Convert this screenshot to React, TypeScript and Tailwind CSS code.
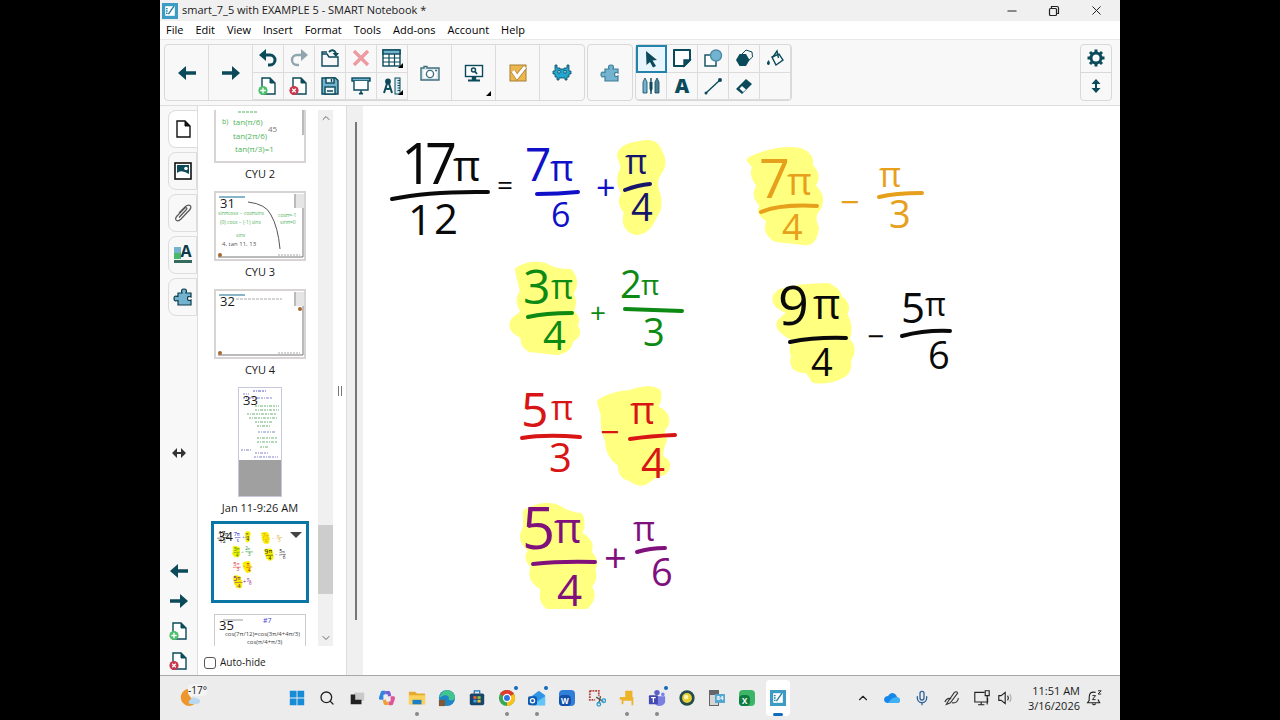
import type { ReactNode } from "react";
import { ChevronDown, ChevronUp, Mic, Minus, Search, X } from "lucide-react";

const TEAL = "#0b4a5a";
const BLUE = "#73b3d0";

const Svg = ({ size = 20, children }: { size?: number; children: ReactNode }) => (
    <svg width={size} height={size} viewBox="0 0 20 20" fill="none" stroke={TEAL} strokeWidth="1.4" aria-hidden>
        {children}
    </svg>
);

const ArrowLeft = () => (
    <Svg>
        <path d="M1 10 L9 3 V8.2 H19 V11.8 H9 V17 Z" fill={TEAL} stroke="none" />
    </Svg>
);

const ArrowRight = () => (
    <Svg>
        <path d="M19 10 L11 3 V8.2 H1 V11.8 H11 V17 Z" fill={TEAL} stroke="none" />
    </Svg>
);

const Undo = () => (
    <Svg>
        <path d="M5 7 H12 A5 5 0 0 1 12 17 H10" strokeWidth="3" />
        <path d="M1 7 L8 1 V13 Z" fill={TEAL} stroke="none" />
    </Svg>
);

const Redo = () => (
    <Svg>
        <path d="M15 7 H8 A5 5 0 0 0 8 17 H10" strokeWidth="2.4" stroke="#8fa6ae" />
        <path d="M19 7 L12 1 V13 Z" fill="#8fa6ae" stroke="none" />
    </Svg>
);

const OpenFile = () => (
    <Svg>
        <path d="M2 6 V18 H18 V9 H9 L7 6 Z M2 6 V4 H7" />
        <path d="M9 4 Q13 0 16 5" strokeWidth="2" />
        <path d="M12.5 5 H19 L16 9 Z" fill={TEAL} stroke="none" />
    </Svg>
);

const Delete = () => (
    <Svg>
        <path d="M3 3 L17 17 M17 3 L3 17" stroke="#ee9aa2" strokeWidth="3.4" />
    </Svg>
);

const TableIcon = () => (
    <Svg>
        <rect x="1" y="2" width="17" height="16" fill="#fff" />
        <rect x="1" y="2" width="17" height="4" fill={BLUE} />
        <path d="M1 10 H18 M1 14 H18 M7 6 V18 M12.5 6 V18" strokeWidth="1.2" />
    </Svg>
);

const PageIcon = ({ badge }: { badge?: "plus" | "cross" }) => (
    <Svg>
        <path d="M4 2 H12 L17 7 V18 H4 Z" fill="#fff" stroke={badge ? TEAL : "#111"} />
        <path d="M12 2 V7 H17 Z" fill={badge ? TEAL : "#111"} stroke={badge ? TEAL : "#111"} strokeWidth="1" />
        {badge === "plus" && (
            <>
                <circle cx="5" cy="14.5" r="4.6" fill="#4bbf6b" stroke="none" />
                <path d="M5 11.8 V17.2 M2.3 14.5 H7.7" stroke="#fff" strokeWidth="1.3" />
            </>
        )}
        {badge === "cross" && (
            <>
                <circle cx="5" cy="14.5" r="4.6" fill="#c8384f" stroke="none" />
                <path d="M3.2 12.7 L6.8 16.3 M6.8 12.7 L3.2 16.3" stroke="#fff" strokeWidth="1.3" />
            </>
        )}
    </Svg>
);

const Save = () => (
    <Svg>
        <path d="M2 2 H15.5 L18 4.5 V18 H2 Z" fill={BLUE} />
        <rect x="6" y="2" width="8" height="5" fill="#eef6fa" />
        <rect x="5" y="11" width="10" height="7" fill="#eef6fa" />
        <path d="M7 15 H13 M11.5 3 V6" />
    </Svg>
);

const Screen = () => (
    <Svg>
        <rect x="1" y="2" width="18" height="3" fill={BLUE} />
        <path d="M3 5 V14 H17 V5" fill="#fff" />
        <path d="M10 14 V16 M8 18 L10 15.5 L12 18 Z" fill={TEAL} strokeWidth="1" />
    </Svg>
);

const Compass = () => (
    <Svg>
        <path d="M6 3 V6 M5.5 6 L2 17 M6.5 6 L10 17 M3 12 Q6 14 9 12" strokeWidth="2" />
        <circle cx="6" cy="5.5" r="2.2" fill={TEAL} />
        <rect x="13" y="2" width="5" height="16" fill="#dcecf3" strokeWidth="1" />
        <path d="M15.5 4.5 H18 M15.5 7 H18 M15.5 9.5 H18 M15.5 12 H18 M15.5 14.5 H18" strokeWidth="1" />
    </Svg>
);

const Camera = () => (
    <Svg>
        <path d="M1 5 H4 V3.5 H7 V5 H19 V17 H1 Z" fill="#d8e8ee" stroke="#416f7d" />
        <rect x="3.5" y="7" width="13" height="8" fill="#fff" stroke="none" />
        <circle cx="10" cy="11" r="3.6" fill="#fff" stroke="#416f7d" />
        <path d="M15 7.5 H17" stroke="#416f7d" />
    </Svg>
);

const Monitor = () => (
    <Svg>
        <rect x="1.5" y="2.5" width="17" height="11" fill="#fff" />
        <path d="M4 17.5 H16" strokeWidth="2" />
        <path d="M8.5 14 H11.5 V17 H8.5 Z" fill={TEAL} />
        <circle cx="9.5" cy="7" r="2" strokeWidth="1.5" />
        <path d="M11 8.5 L13 11" strokeWidth="1.8" />
    </Svg>
);

const Check = () => (
    <Svg>
        <rect x="2" y="2" width="16" height="16" fill="#ecb84d" stroke="#a97f35" strokeWidth="1" />
        <path d="M5 8 L9 14 L17 4" stroke="#a97f35" strokeWidth="4.6" />
        <path d="M5 8 L9 14 L17 4" stroke="#fff" strokeWidth="3.2" />
    </Svg>
);

const Monster = () => (
    <Svg>
        <path
            d="M3 2 H5 V5 H8 V6 H12 V5 H15 V2 H17 V8 H19 V11 H17 V14 H15 V17 H13 V15 H7 V17 H5 V14 H3 V11 H1 V8 H3 Z"
            fill="#22a5cf"
            strokeWidth="0.8"
        />
        <path d="M6 7.5 H8 V10 H6 Z M12 7.5 H14 V10 H12 Z" fill="#fff" strokeWidth="0.8" />
    </Svg>
);

const Puzzle = ({ stroke = "#3f7f99" }: { stroke?: string }) => (
    <Svg>
        <path
            d="M5 18 V13.5 Q1 15 1 11.5 Q1 8 5 9.5 V6 H9 Q7.5 2 11 2 Q14.5 2 13 6 H18 V10 Q14.5 8.5 14.5 11.5 Q14.5 14.5 18 13 V18 Z"
            fill={BLUE}
            stroke={stroke}
            strokeWidth="1.2"
        />
    </Svg>
);

const Pointer = () => (
    <Svg>
        <path d="M4 2 L15 11 L10.5 11.5 L14 17 L11 18.5 L8 13 L4.5 16 Z" fill={TEAL} stroke="none" />
    </Svg>
);

const Note = () => (
    <Svg>
        <path d="M2 2 H18 V12 L12 18 H2 Z" fill="#fff" strokeWidth="2" strokeLinejoin="round" />
        <path d="M18 12 H12 V18 Z" fill={TEAL} />
    </Svg>
);

const Shapes = () => (
    <Svg>
        <rect x="2" y="7" width="11" height="11" fill="#fff" />
        <circle cx="13" cy="7.5" r="5.5" fill={BLUE} stroke="#4a8ba6" />
    </Svg>
);

const Hexagons = () => (
    <Svg>
        <path d="M8 6 L12 2 L18 4 L18.5 9 L14 13" strokeWidth="1" />
        <path d="M5.5 6 H12 L15.5 12 L12 18 H5.5 L2 12 Z" fill={TEAL} stroke="none" />
    </Svg>
);

const Fill = () => (
    <Svg>
        <path d="M7 9 L14 6 L18 12 L11 17 Z" fill="#fff" />
        <path d="M8 9 L12 3 L13.5 10" />
        <path d="M3.5 12 Q6 15 4 17 Q1.5 17 2 14.5 Z" fill={TEAL} stroke="none" />
    </Svg>
);

const Pens = () => (
    <Svg>
        <path d="M2 6 L4 2 L6 6 V17 H2 Z" fill={BLUE} strokeWidth="0.8" />
        <path d="M10 2 V18" strokeWidth="1.4" />
        <path d="M8.5 6 H11.5 V13 L10 16 L8.5 13 Z" fill={TEAL} stroke="none" />
        <path d="M14 6 L16 2 L18 6 V17 H14 Z" fill="#4c8195" strokeWidth="0.8" />
    </Svg>
);

const LineTool = () => (
    <Svg>
        <path d="M3 17 L17 4" />
        <circle cx="3" cy="17" r="1.5" fill={TEAL} stroke="none" />
        <circle cx="17" cy="4" r="2" fill={TEAL} stroke="none" />
    </Svg>
);

const Eraser = () => (
    <Svg>
        <path d="M2 13 L12 3 L18 8 L8 18 Z" fill={TEAL} stroke="none" />
        <path d="M5.5 12.5 L8 10 L12 13.5 L9 16 Z" fill="#fff" stroke="none" />
    </Svg>
);

const Gear = () => (
    <Svg>
        <path d="M10 1.5 V18.5 M1.5 10 H18.5 M4 4 L16 16 M16 4 L4 16" strokeWidth="3" />
        <circle cx="10" cy="10" r="5" fill="#fff" strokeWidth="3" />
    </Svg>
);

const UpDown = () => (
    <Svg>
        <path d="M10 6 V14" strokeWidth="2" />
        <path d="M10 3 L14.5 8 H5.5 Z M10 17 L14.5 12 H5.5 Z" fill={TEAL} stroke="none" />
    </Svg>
);

const Notebook = ({ size = 16 }: { size?: number }) => (
    <Svg size={size}>
        <rect x="0" y="0" width="20" height="20" fill="#3d9cc4" stroke="none" />
        <rect x="4" y="4" width="12" height="12" fill="#fff" stroke="none" />
        <path d="M8 14 L15 4 M5 7 H7 M5 10 H7 M5 13 H7" stroke="#2b7ea3" strokeWidth="1.8" />
    </Svg>
);

const Picture = () => (
    <Svg>
        <rect x="2" y="2" width="16" height="16" fill="#fff" stroke="#111" strokeWidth="1.6" />
        <path d="M4 4 H16 V14 H4 Z" fill={TEAL} stroke="none" />
        <path d="M4 12 Q8 8 16 13 V14 H4 Z" fill="#fff" stroke="none" />
        <circle cx="13" cy="7.5" r="1.8" fill="#fff" stroke="none" />
    </Svg>
);

const Clip = () => (
    <Svg>
        <path
            d="M6 14.5 L13 7 Q14.5 5.5 13.5 4.8 Q12.5 4.2 11 5.8 L4 13 Q1.5 16 3.5 17.5 Q5.5 18.5 8 16 L16.5 7 Q19 4 17 2.5 Q15 1.2 12.5 3.5 L6 10"
            stroke="#555"
            strokeWidth="1.2"
        />
    </Svg>
);

const Palette = () => (
    <Svg>
        <rect x="1" y="2" width="7" height="6" fill={BLUE} stroke="none" />
        <rect x="1" y="8" width="7" height="6" fill="#46b96a" stroke="none" />
        <path d="M1 16.5 H19" strokeWidth="3" stroke="#356b5c" />
    </Svg>
);

const toolPairs: { label: string; icon: ReactNode; more?: boolean }[] = [
    { label: "Undo", icon: <Undo /> },
    { label: "Redo", icon: <Redo /> },
    { label: "Open file", icon: <OpenFile /> },
    { label: "Delete", icon: <Delete /> },
    { label: "Table", icon: <TableIcon />, more: true },
    { label: "Add page", icon: <PageIcon badge="plus" /> },
    { label: "Delete page", icon: <PageIcon badge="cross" /> },
    { label: "Save", icon: <Save /> },
    { label: "Screen shade", icon: <Screen /> },
    { label: "Measurement tools", icon: <Compass />, more: true },
];

const drawTools: { label: string; icon: ReactNode }[] = [
    { label: "Select", icon: <Pointer /> },
    { label: "Note", icon: <Note /> },
    { label: "Shapes", icon: <Shapes /> },
    { label: "Polygons", icon: <Hexagons /> },
    { label: "Fill", icon: <Fill /> },
    { label: "Pens", icon: <Pens /> },
    { label: "Text", icon: <span className="text-xl font-extrabold leading-5 text-[#0b4a5a]">A</span> },
    { label: "Line", icon: <LineTool /> },
    { label: "Eraser", icon: <Eraser /> },
    { label: "Empty", icon: null },
];

const Corner = () => (
    <span className="absolute bottom-1 right-1 border-b-[5px] border-l-[5px] border-b-black border-l-transparent" />
);

const BigTool = ({ label, more, children }: { label: string; more?: boolean; children: ReactNode }) => (
    <button aria-label={label} className="relative flex w-11 items-center justify-center border-r border-[#dcdcdc] last:border-r-0">
        {children}
        {more && <Corner />}
    </button>
);

const Toolbar = () => (
    <div className="flex h-[66px] shrink-0 items-start justify-between border-t border-[#e8e8e8] bg-[#f8f8f8] px-1 pt-1">
        <div className="flex gap-0.5">
            <div className="flex h-[57px] rounded border border-[#d8d8d8]">
                <BigTool label="Previous page"><ArrowLeft /></BigTool>
                <BigTool label="Next page"><ArrowRight /></BigTool>
                <div className="grid grid-cols-5 grid-rows-2">
                    {toolPairs.map((t) => (
                        <button key={t.label} aria-label={t.label} className="relative flex w-[31px] items-center justify-center border-b border-r border-[#dcdcdc]">
                            {t.icon}
                            {t.more && <Corner />}
                        </button>
                    ))}
                </div>
                <BigTool label="Capture"><Camera /></BigTool>
                <BigTool label="Screen search" more><Monitor /></BigTool>
                <BigTool label="Response"><Check /></BigTool>
                <BigTool label="Activity builder"><Monster /></BigTool>
            </div>
            <div className="flex h-[57px] rounded border border-[#d8d8d8]">
                <BigTool label="Add-ons"><Puzzle /></BigTool>
            </div>
            <div className="grid h-[57px] grid-cols-5 grid-rows-2 rounded border border-[#d8d8d8]">
                {drawTools.map((t) => (
                    <button
                        key={t.label}
                        aria-label={t.label}
                        className={
                            t.label === "Select"
                                ? "flex w-[31px] items-center justify-center border-2 border-[#2483ad] bg-[#e8f5fc]"
                                : "flex w-[31px] items-center justify-center border-b border-r border-[#dcdcdc]"
                        }
                    >
                        {t.icon}
                    </button>
                ))}
            </div>
        </div>
        <div className="mr-1 grid h-[57px] w-8 grid-rows-2 rounded border border-[#d8d8d8]">
            <button aria-label="Settings" className="flex items-center justify-center border-b border-[#d8d8d8]"><Gear /></button>
            <button aria-label="Move toolbar" className="flex items-center justify-center"><UpDown /></button>
        </div>
    </div>
);

// x, baseline, size, text
type Mark = [number, number, number, string];

const ink: { color: string; marks: Mark[]; bars: string[] }[] = [
    {
        color: "#0a0a0a",
        marks: [
            [401, 184, 56, "1"], [425, 184, 56, "7"], [453, 181, 42, "π"],
            [408, 235, 42, "1"], [434, 234, 42, "2"], [497, 195, 28, "="],
        ],
        bars: ["M392 199 Q430 191 488 192"],
    },
    { color: "#1010c8", marks: [[525, 181, 46, "7"], [550, 181, 36, "π"], [551, 227, 34, "6"], [596, 200, 34, "+"]], bars: ["M537 194 Q558 194 578 192"] },
    { color: "#15156a", marks: [[625, 174, 34, "π"], [631, 221, 38, "4"]], bars: ["M625 190 Q638 185 650 184"] },
    {
        color: "#0c8a14",
        marks: [
            [523, 304, 48, "3"], [551, 299, 34, "π"], [543, 350, 40, "4"], [590, 323, 28, "+"],
            [620, 298, 38, "2"], [641, 295, 28, "π"], [643, 346, 38, "3"],
        ],
        bars: ["M528 317 Q545 313 572 313", "M625 309 L682 311"],
    },
    {
        color: "#d81414",
        marks: [
            [521, 427, 48, "5"], [551, 420, 34, "π"], [549, 472, 40, "3"], [600, 444, 34, "−"],
            [630, 424, 38, "π"], [641, 478, 42, "4"],
        ],
        bars: ["M522 438 Q545 434 580 437", "M630 439 Q650 436 675 435"],
    },
    {
        color: "#80107c",
        marks: [
            [522, 549, 58, "5"], [554, 543, 42, "π"], [557, 606, 44, "4"], [604, 573, 40, "+"],
            [633, 541, 34, "π"], [651, 586, 38, "6"],
        ],
        bars: ["M533 564 Q560 561 595 562", "M637 552 Q650 548 665 548"],
    },
    {
        color: "#e6a01c",
        marks: [
            [759, 198, 54, "7"], [787, 195, 38, "π"], [782, 240, 36, "4"], [840, 214, 34, "−"],
            [879, 187, 34, "π"], [889, 228, 38, "3"],
        ],
        bars: ["M761 212 Q780 204 817 206", "M879 197 Q895 193 922 193"],
    },
    {
        color: "#0a0a0a",
        marks: [
            [778, 325, 54, "9"], [813, 319, 42, "π"], [811, 376, 38, "4"], [867, 347, 30, "−"],
            [901, 323, 42, "5"], [925, 316, 32, "π"], [928, 369, 38, "6"],
        ],
        bars: ["M790 342 Q815 337 846 338", "M902 336 Q925 330 950 331"],
    },
];

const highlights = [
    "M620 155 Q622 146 640 144 Q656 140 659 152 Q666 162 659 172 Q653 180 656 190 Q662 206 654 216 Q648 232 636 232 Q622 228 627 212 Q618 202 625 194 Q616 180 624 168 Z",
    "M518 270 Q530 262 545 266 Q555 272 570 272 Q578 282 570 294 Q576 302 570 312 Q580 318 574 326 Q582 334 570 340 Q570 350 556 352 L530 349 Q522 345 524 336 Q508 330 514 320 Q520 316 524 312 Q516 300 523 292 Z",
    "M600 402 Q612 394 630 393 Q650 386 658 392 Q660 402 653 408 Q668 412 666 424 Q658 432 664 440 Q660 448 660 458 Q672 462 664 472 Q654 474 648 480 Q640 486 630 478 Q620 476 621 464 Q608 456 608 440 Q602 426 604 416 Z",
    "M526 512 Q545 502 558 508 Q566 514 580 516 Q584 526 578 534 Q594 542 588 552 Q598 562 592 568 Q596 580 588 586 Q596 596 586 606 L548 606 Q540 600 544 588 Q528 580 534 566 Q524 558 532 550 Q518 540 526 528 Z",
    "M750 160 Q770 150 790 150 Q812 150 810 166 Q820 176 812 186 Q824 196 818 208 Q810 216 816 228 Q814 244 804 242 L776 239 Q764 232 770 220 Q756 212 764 206 Q752 196 760 186 Q750 172 756 168 Z",
    "M780 292 Q800 286 828 286 Q840 292 838 298 Q850 304 844 314 Q852 328 846 340 Q856 348 848 360 Q850 372 840 376 Q828 382 814 380 Q810 372 806 370 Q790 370 794 356 Q790 346 798 340 Q776 330 780 322 Q786 316 792 312 Q772 306 776 296 Z",
];

const InkPage = ({ glow = "#ffff80" }: { glow?: string }) => (
    <svg className="block h-auto w-full" viewBox="363 106 757 569" role="img" aria-label="Sums and differences of angles">
        <g fill={glow} stroke={glow} strokeWidth="6" strokeLinejoin="round">
            {highlights.map((d) => <path key={d} d={d} />)}
        </g>
        {ink.map((group, i) => (
            <g key={i}>
                <g fill={group.color} className="font-['Open_Sans',sans-serif]">
                    {group.marks.map(([x, y, size, text]) => (
                        <text key={`${x}-${y}`} x={x} y={y} fontSize={size}>{text}</text>
                    ))}
                </g>
                <g fill="none" stroke={group.color} strokeWidth="4" strokeLinecap="round">
                    {group.bars.map((d) => <path key={d} d={d} />)}
                </g>
            </g>
        ))}
    </svg>
);

const PageNumber = ({ children }: { children: ReactNode }) => (
    <span className="absolute left-1 top-0.5 text-[13px] leading-4">{children}</span>
);

const PageFrame = ({ number, children }: { number: string; children?: ReactNode }) => (
    <button className="relative h-[70px] w-[92px] shrink-0 border-2 border-[#d8d4d4] bg-white text-left">
        <svg className="block" width="88" height="66" viewBox="0 0 88 66" aria-hidden>
            <rect x="3" y="3" width="26" height="2" fill="#8ab4c8" />
            <path d="M79 1 V15 M87 15 V64 H2" stroke="#777" fill="none" />
            <rect x="80" y="1" width="8" height="14" fill="#e5e5e5" />
            <circle cx="4" cy="62" r="2" fill="#a8672d" />
            <path d="M62 62 H84" stroke="#aaa" strokeDasharray="2 1" />
            {children}
        </svg>
        <PageNumber>{number}</PageNumber>
    </button>
);

const Label = ({ children }: { children: ReactNode }) => (
    <p className="mb-1.5 h-[22px] shrink-0 whitespace-nowrap text-center text-[11px] leading-[22px]">{children}</p>
);

const scribbles: [number, number, number, string][] = [
    [4, 6, 6, "#7777cc"], [14, 3, 14, "#4444cc"], [4, 10, 30, "#7777cc"],
    [16, 18, 24, "#55a866"], [16, 22, 24, "#55a866"], [8, 26, 30, "#55a866"], [10, 30, 28, "#55a866"],
    [16, 34, 18, "#55a866"], [18, 38, 14, "#55a866"], [19, 44, 18, "#6688bb"], [18, 50, 20, "#55a866"],
    [18, 54, 20, "#55a866"], [21, 59, 8, "#55a866"], [2, 62, 10, "#7777cc"], [16, 65, 14, "#7777cc"],
    [15, 69, 24, "#7777cc"],
];

const Thumbnails = () => (
    <div className="flex w-[120px] shrink-0 flex-col items-center overflow-hidden pl-1">
        <button className="h-[53px] w-[92px] shrink-0 border-b-2 border-l-2 border-r-2 border-[#d8d4d4]">
            <svg className="block" width="88" height="51" viewBox="0 0 88 51" fill="#52b35c" fontSize="7" aria-hidden>
                <path d="M22 2 H42" stroke="#52b35c" strokeDasharray="3 1" />
                <text x="6" y="14">b)</text>
                <text x="17" y="15" fontSize="8">tan(π/6)</text>
                <text x="17" y="29" fontSize="8">tan(2π/6)</text>
                <text x="19" y="42" fontSize="8">tan(π/3)=1</text>
                <text x="52" y="22" fill="#777" fontSize="8">45</text>
                <path d="M87 0 V25" stroke="#777" />
            </svg>
        </button>
        <Label>CYU 2</Label>
        <PageFrame number="31">
            <g fill="#52b35c" fontSize="5">
                <text x="2" y="22">sinπcosx − cosπsinx</text>
                <text x="4" y="31">(0) cosx − (-1) sinx</text>
                <text x="20" y="44">sinx</text>
                <text x="62" y="24">cosπ=-1</text>
                <text x="64" y="31">sinπ=0</text>
                <text x="6" y="53" fill="#555" fontSize="6">4, tan 11, 13</text>
            </g>
            <path d="M32 9 Q50 11 55 22 Q62 34 64 56" fill="none" stroke="#555" />
        </PageFrame>
        <Label>CYU 3</Label>
        <PageFrame number="32">
            <path d="M20 8 H66" stroke="#aaa" strokeDasharray="3 1" />
            <circle cx="84" cy="18" r="2" fill="#a8672d" />
        </PageFrame>
        <Label>CYU 4</Label>
        <button className="relative h-[110px] w-11 shrink-0 border border-[#c8c8dc] bg-white">
            <svg className="block" width="42" height="108" viewBox="0 0 42 108" aria-hidden>
                {scribbles.map(([x, y, w, color]) => (
                    <path key={`${x}-${y}`} d={`M${x} ${y} h${w}`} stroke={color} strokeWidth="1.5" strokeDasharray="2 1 1 1 3 1" opacity="0.6" />
                ))}
                <rect y="72" width="42" height="36" fill="#a0a0a0" />
            </svg>
            <PageNumber><span className="block pt-0.5">33</span></PageNumber>
        </button>
        <Label>Jan 11-9:26 AM</Label>
        <button className="relative -mt-1 h-[82px] w-[98px] shrink-0 border-[3px] border-[#0a76a6] bg-white">
            <InkPage glow="#f6f000" />
            <span className="absolute left-1 top-1 text-[13px] leading-4">34</span>
            <span className="absolute right-1 top-2 border-x-[6px] border-t-[6px] border-x-transparent border-t-[#444]" />
        </button>
        <button className="relative mt-[11px] h-[70px] w-[92px] shrink-0 border border-[#ccc] bg-white">
            <svg className="block" width="90" height="66" viewBox="0 0 90 66" fill="#444" fontSize="6" aria-hidden>
                <path d="M8 4 H28" stroke="#999" />
                <text x="48" y="7" fill="#4444cc" fontSize="7">#7</text>
                <text x="10" y="20">cos(7π/12)=cos(3π/4+4π/3)</text>
                <text x="32" y="28">cos(π/4+π/3)</text>
            </svg>
            <PageNumber>35</PageNumber>
        </button>
    </div>
);

const tabs = [
    { label: "Page sorter", icon: <PageIcon /> },
    { label: "Gallery", icon: <Picture /> },
    { label: "Attachments", icon: <Clip /> },
    { label: "Properties", icon: <span className="relative"><Palette /><b className="absolute -top-1 left-2 text-base leading-5 text-[#0b3a48]">A</b></span> },
    { label: "Add-ons", icon: <Puzzle stroke="#0b3a48" /> },
];

const SideBar = () => (
    <div className="flex shrink-0">
        <div className="flex w-[37px] flex-col bg-[#f8f8f8] pb-1">
            <div className="flex flex-col gap-1 pl-2 pt-1">
                {tabs.map((t, i) => (
                    <button
                        key={t.label}
                        aria-label={t.label}
                        className={
                            i === 0
                                ? "flex h-[38px] items-center justify-center rounded-l-lg border border-r-0 border-[#ddd] bg-white"
                                : "flex h-[38px] items-center justify-center rounded-l-lg border border-[#ddd]"
                        }
                    >
                        {t.icon}
                    </button>
                ))}
            </div>
            <button aria-label="Resize panel" className="my-auto self-center pt-7">
                <svg width="14" height="10" viewBox="0 0 14 10" fill="#333" aria-hidden>
                    <path d="M0 5 L5 0 V4 H9 V0 L14 5 L9 10 V6 H5 V10 Z" />
                </svg>
            </button>
            <div className="flex flex-col items-center gap-2.5">
                <button aria-label="Back"><ArrowLeft /></button>
                <button aria-label="Forward"><ArrowRight /></button>
                <button aria-label="Insert page"><PageIcon badge="plus" /></button>
                <button aria-label="Remove page"><PageIcon badge="cross" /></button>
            </div>
        </div>
        <div className="flex w-[136px] flex-col border-l border-[#ddd] bg-white pt-1">
            <div className="flex min-h-0 flex-1 overflow-hidden">
                <Thumbnails />
                <div className="flex w-4 shrink-0 flex-col items-center bg-[#f0f0f0] text-[#666]">
                    <ChevronUp size={12} className="my-0.5 shrink-0" />
                    <div className="min-h-0 flex-[400]" />
                    <div className="min-h-0 w-4 flex-[69] bg-[#cdcdcd]" />
                    <div className="min-h-0 flex-[36]" />
                    <ChevronDown size={12} className="my-0.5 shrink-0" />
                </div>
            </div>
            <label className="flex h-[29px] items-center gap-1 pl-1.5 pt-1 text-[10px]">
                <input type="checkbox" className="size-3 appearance-none rounded-[3px] border border-[#555] bg-white" />
                Auto-hide
            </label>
        </div>
        <div className="flex w-[14px] items-center justify-center border-r border-[#ddd] bg-white">
            <span className="h-2.5 w-1 border-x border-[#777]" />
        </div>
        <div className="w-4 bg-[#f0f0f0] pl-2 pt-4">
            <div className="h-[90%] w-0.5 bg-[#777]" />
        </div>
    </div>
);

const apps: { label: string; dot?: boolean; alert?: boolean; icon: ReactNode }[] = [
    { label: "Start", icon: <Svg size={18}><path d="M2 2 H9.5 V9.5 H2 Z M10.5 2 H18 V9.5 H10.5 Z M2 10.5 H9.5 V18 H2 Z M10.5 10.5 H18 V18 H10.5 Z" fill="#168bd8" stroke="none" /></Svg> },
    { label: "Search", icon: <Search size={16} color="#222" /> },
    { label: "Task view", icon: <Svg size={18}><rect x="7" y="4" width="11" height="9" fill="#c9c9c9" stroke="none" /><path d="M3 6 H8 V12 H15 V17 H3 Z" fill="#222" stroke="none" /></Svg> },
    {
        label: "Copilot",
        icon: (
            <Svg size={18}>
                <path d="M8 4 H5 L3 10 H6" stroke="#2f86e0" strokeWidth="4" strokeLinejoin="round" />
                <path d="M12 16 H15 L17 10 H14" stroke="#e0559a" strokeWidth="4" strokeLinejoin="round" />
                <path d="M8 4 H12 L13 8" stroke="#7b5bd6" strokeWidth="3.5" strokeLinejoin="round" />
                <path d="M12 16 H8 L7 12" stroke="#f0a03a" strokeWidth="3.5" strokeLinejoin="round" />
            </Svg>
        ),
    },
    { label: "File Explorer", dot: true, icon: <Svg size={18}><path d="M1 3 H8 L10 5 H19 V17 H1 Z" fill="#e6ab2e" stroke="none" /><path d="M1 7 H19 V17 H1 Z" fill="#fbd35c" stroke="none" /><path d="M5 12 H15 V17 H5 Z" fill="#1d80c4" stroke="none" /></Svg> },
    { label: "Edge", icon: <Svg size={18}><circle cx="10" cy="10" r="9" fill="#1c86c8" stroke="none" /><path d="M2 8 Q5 1 11 1 Q19 3 19 10 Q17 14 12 12 Q13 7 8 7 Q4 7 2 10 Z" fill="#42c48c" stroke="none" /><path d="M1 12 H8 V19 H1 Z" fill="#7d5a37" stroke="none" /></Svg> },
    { label: "Store", icon: <Svg size={18}><path d="M7 5 V2 H13 V5" stroke="#1a75b5" /><rect x="2" y="5" width="16" height="13" rx="2" fill="#17456b" stroke="none" /><path d="M6 8 H9.5 V11 H6 Z" fill="#f2603c" stroke="none" /><path d="M10.5 8 H14 V11 H10.5 Z" fill="#8cc63f" stroke="none" /><path d="M6 12 H9.5 V15 H6 Z" fill="#3aa7e8" stroke="none" /><path d="M10.5 12 H14 V15 H10.5 Z" fill="#fdc52d" stroke="none" /></Svg> },
    { label: "Chrome", dot: true, alert: true, icon: <Svg size={18}><circle cx="10" cy="10" r="9" fill="#3aa757" stroke="none" /><path d="M10 10 L2.2 5.5 A9 9 0 0 1 17.8 5.5 Z" fill="#e33b2e" stroke="none" /><path d="M10 10 L17.8 5.5 A9 9 0 0 1 10 19 Z" fill="#fbc116" stroke="none" /><circle cx="10" cy="10" r="4" fill="#2f74e0" stroke="#fff" /></Svg> },
    { label: "Outlook", dot: true, alert: true, icon: <Svg size={18}><path d="M4 8 L12 2 L19 7 V18 H4 Z" fill="#2f95e6" stroke="none" /><path d="M4 18 L19 8 V18 Z" fill="#63c5f5" stroke="none" /><rect x="0" y="8" width="10" height="10" rx="2" fill="#0f5cb0" stroke="none" /><circle cx="5" cy="13" r="2.3" stroke="#fff" /></Svg> },
    { label: "Word", icon: <span className="flex h-4 w-4 items-end rounded-sm bg-[#2f7fd8]"><b className="rounded-sm bg-[#1450a8] px-0.5 text-[8px] leading-[11px] text-white">W</b></span> },
    { label: "Snipping Tool", icon: <Svg size={18}><path d="M2 2 H12 V8 M2 2 V12 H8" stroke="#b5403a" strokeWidth="2" strokeDasharray="2 1" /><path d="M9 9 L17 14 M12 16 L14 8" stroke="#555" /><circle cx="17.5" cy="13" r="2" stroke="#2a9bd0" /><circle cx="12" cy="17" r="2" stroke="#2a9bd0" /></Svg> },
    { label: "Desk", dot: true, icon: <Svg size={18}><path d="M8 2 H16 V9 H17 V18 H15 V13 H6 V17 H4 V12 H2 V9 H8 Z" fill="#edb42a" stroke="none" /></Svg> },
    { label: "Teams", dot: true, alert: true, icon: <Svg size={18}><circle cx="10" cy="4" r="3" fill="#5b5fc7" stroke="none" /><circle cx="16.5" cy="6" r="2" fill="#7b83eb" stroke="none" /><path d="M7 8 H19 V15 Q17 19 12 19 Q7 18 7 14 Z" fill="#7b7fe0" stroke="none" /><rect x="1" y="7" width="10" height="10" rx="1" fill="#4349b0" stroke="none" /><path d="M3.5 9.5 H8.5 M6 9.5 V15" stroke="#fff" /></Svg> },
    { label: "Recorder", icon: <Svg size={18}><circle cx="10" cy="10" r="8.5" fill="#254c4d" stroke="none" /><circle cx="10" cy="10" r="5.5" fill="#e6cf38" stroke="none" /><circle cx="9" cy="9" r="2.5" fill="#fff7b0" stroke="none" /></Svg> },
    { label: "Calculator", icon: <span className="flex items-center"><span className="h-4 w-2.5 border border-t-[5px] border-[#666] bg-[#d5d5d5]" /><b className="-ml-1 bg-[#55a9d0] px-0.5 text-[6px] leading-[9px] text-white">84</b></span> },
    { label: "Excel", icon: <span className="flex h-4 w-4 items-end rounded-sm bg-[#3db568]"><b className="rounded-sm bg-[#107c41] px-[3px] text-[8px] leading-[11px] text-white">X</b></span> },
];

const Taskbar = () => (
    <footer className="flex h-[45px] shrink-0 items-center border-t border-[#a8a8a8] bg-[#ececec] text-[11px]">
        <button className="relative h-9 w-[122px] shrink-0 pl-5">
            <svg width="22" height="18" viewBox="0 0 22 18" aria-hidden>
                <path d="M8 0 A8.5 8.5 0 1 0 17 12 Q8 10 8 0 Z" fill="#ee962b" />
                <path d="M10 15 Q7 13 10 11 Q12 7 16 9 Q21 10 20 13 Q19 15 17 15 Z" fill="#b7d8f0" />
            </svg>
            <span className="absolute left-7 top-1 rounded bg-[#f4f4f4] text-[10px] leading-3">-17°</span>
        </button>
        <nav className="flex" aria-label="Apps">
            {apps.map((a) => (
                <button key={a.label} aria-label={a.label} className="relative flex h-9 w-[30px] items-center justify-center">
                    {a.icon}
                    {a.alert && <span className="absolute right-1 top-1.5 size-1 rounded-full bg-[#0f6cbd]" />}
                    {a.dot && <span className="absolute bottom-0 size-1 rounded-full bg-[#888]" />}
                </button>
            ))}
            <button aria-label="SMART Notebook" className="relative ml-1 flex h-9 w-6 items-center justify-center rounded bg-white">
                <Notebook />
                <span className="absolute bottom-0 h-[3px] w-2.5 rounded bg-[#0f6cbd]" />
            </button>
        </nav>
        <div className="ml-auto flex items-center gap-3.5 pr-[18px]">
            <ChevronUp size={14} color="#222" />
            <svg width="16" height="12" viewBox="0 0 16 12" aria-hidden>
                <path d="M4 11 Q0 11 0 7 Q1 4 4 4 Q7 -1 11 2 Q13 4 13 5 Q16 6 16 8 Q16 11 13 11 Z" fill="#1687e8" />
                <path d="M4 11 Q8 5 13 5 Q16 6 16 8 Q16 11 13 11 Z" fill="#3fb2f7" />
            </svg>
            <Mic size={16} color="#2f6398" />
            <Svg size={16}>
                <path d="M4 16 L13 3 Q16 1 17 4 L8 16 L3 18 Z M1 15 Q4 9 9 11 M10 16 Q17 17 18 10" stroke="#333" />
            </Svg>
            <div className="flex gap-2">
                <Svg size={16}>
                    <path d="M13 3 H1 V15 H17 V10 M5 18.5 H13 M9 15 V18 M14 1 H19 V7 H14 Z M16.5 7 V18" stroke="#222" />
                </Svg>
                <Svg size={16}>
                    <path d="M1 7 H4 L9 3 V17 L4 13 H1 Z M12 7 Q14 10 12 13" stroke="#222" />
                    <path d="M14.5 5 Q18 10 14.5 15" stroke="#aaa" />
                </Svg>
            </div>
            <div className="text-right leading-[15px]">
                <p>11:51 AM</p>
                <p>3/16/2026</p>
            </div>
            <button aria-label="Notifications" className="-ml-2">
                <Svg size={16}>
                    <path d="M12 3 Q4 1 4 9 V13 L2 16 H17 L15 12 M8 17 Q10 20 12 17" stroke="#222" />
                    <path d="M8 7 H12 L8 12 H12 M15 1 H19 L15 5 H19" stroke="#222" strokeWidth="1.2" />
                </Svg>
            </button>
        </div>
    </footer>
);

const menus = ["File", "Edit", "View", "Insert", "Format", "Tools", "Add-ons", "Account", "Help"];

const App = () => {
    return (
        <div className="h-screen bg-black px-[12.5%] font-['Open_Sans','Noto_Sans',sans-serif] text-[#1a1a1a]">
            <div className="flex h-full flex-col bg-white">
                <header className="flex h-[21px] shrink-0 items-center bg-[#f0f0f0] pl-0.5">
                    <Notebook />
                    <h1 className="ml-1 text-[11px]">smart_7_5 with EXAMPLE 5 - SMART Notebook *</h1>
                    <div className="ml-auto flex gap-7 pr-4">
                        <button aria-label="Minimize"><Minus size={14} color="#222" /></button>
                        <button aria-label="Restore">
                            <svg width="14" height="14" viewBox="0 0 14 14" fill="none" stroke="#222" strokeWidth="1.2" aria-hidden>
                                <rect x="2.5" y="4.5" width="7" height="7" rx="1" />
                                <path d="M4.5 4 V2.5 H10 Q11.5 2.5 11.5 4 V9.5 H10" />
                            </svg>
                        </button>
                        <button aria-label="Close"><X size={15} strokeWidth={1.6} color="#222" /></button>
                    </div>
                </header>
                <nav className="flex h-[18px] shrink-0 items-center gap-3 pl-1.5 text-[11px] leading-5 text-black" aria-label="Menu">
                    {menus.map((m) => <button key={m}>{m}</button>)}
                </nav>
                <Toolbar />
                <main className="flex min-h-0 flex-1 border-t border-[#ddd]">
                    <SideBar />
                    <div className="min-w-0 flex-1 overflow-hidden bg-white">
                        <InkPage />
                    </div>
                </main>
                <Taskbar />
            </div>
        </div>
    );
};

export default App;
